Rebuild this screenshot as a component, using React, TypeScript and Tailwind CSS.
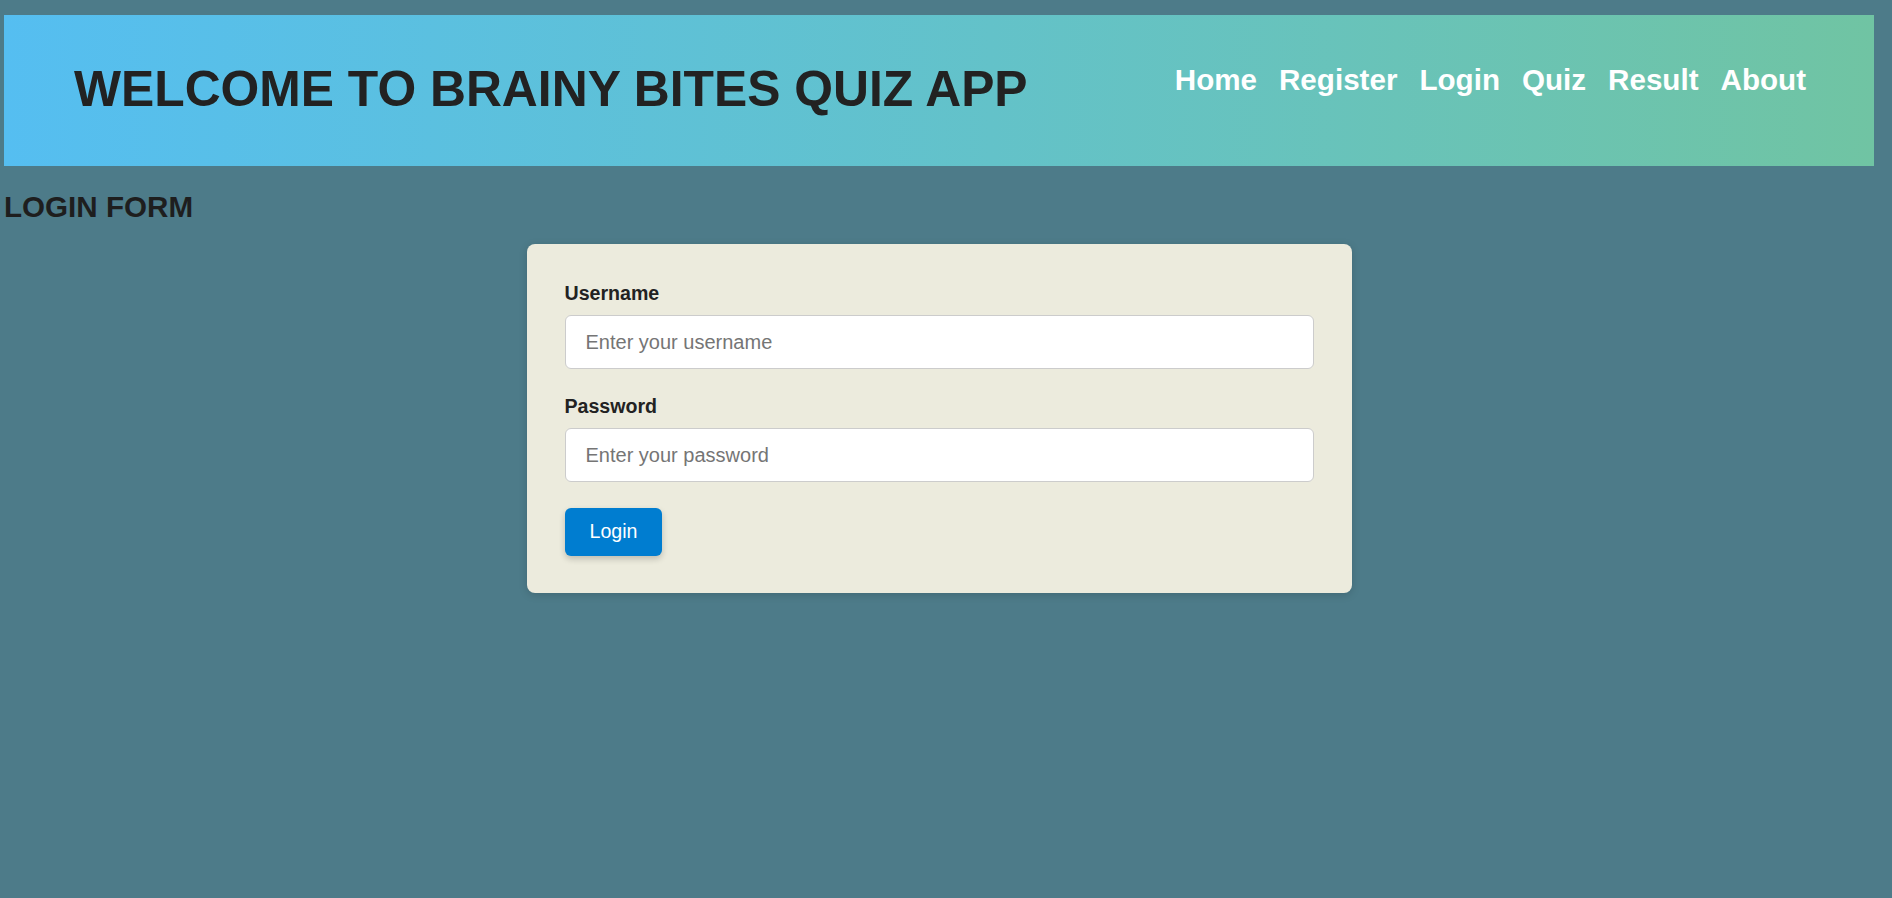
const navLinks = ['Home', 'Register', 'Login', 'Quiz', 'Result', 'About'];

const Header = () => (
  <header className="ml-[4px] flex h-[151px] w-[1870px] items-start justify-between bg-gradient-to-r from-[#55bef1] to-[#70c4a3] pl-[70px] pr-[68px]">
    <h1 className="mt-[46px] text-[49.8px] font-bold leading-[57px] text-[#222222]">
      WELCOME TO BRAINY BITES QUIZ APP
    </h1>
    <nav className="mt-[48px] flex gap-[22px]">
      {navLinks.map((link) => (
        <a key={link} href="#" className="text-[29.6px] font-bold leading-[34px] text-white">
          {link}
        </a>
      ))}
    </nav>
  </header>
);

const Field = ({ label, placeholder, type }: { label: string; placeholder: string; type: string }) => (
  <div className="mb-[26px] flex flex-col">
    <label className="mb-[10px] text-[19.6px] font-bold leading-[23px] text-[#222222]">{label}</label>
    <input
      type={type}
      placeholder={placeholder}
      className="h-[54px] w-full rounded-[6px] border border-[#cccccc] bg-white px-[20px] text-[20px] text-[#222222] outline-none placeholder:text-[#757575]"
    />
  </div>
);

export default function App() {
  return (
    <div
      className="min-h-[898px] w-full bg-[#4d7b89] pt-[15px] pb-10"
      style={{ fontFamily: '"Liberation Sans", Arial, sans-serif' }}
    >
      <Header />
      <h2 className="ml-[4px] mt-[24px] text-[29.6px] font-bold leading-[34px] text-[#1e1e1e]">LOGIN FORM</h2>
      <div className="mt-[20px] w-[1878px]">
        <form className="mx-auto w-[825px] rounded-[8px] bg-[#ecebdd] p-[38px] pb-[37px] shadow-[0_2px_8px_rgba(0,0,0,0.15)]">
          <Field label="Username" placeholder="Enter your username" type="text" />
          <Field label="Password" placeholder="Enter your password" type="password" />
          <button
            type="button"
            className="h-[48px] rounded-[6px] bg-[#007dd0] px-[25px] text-[19.6px] text-white shadow-[0_3px_6px_rgba(0,0,0,0.2)]"
          >
            Login
          </button>
        </form>
      </div>
    </div>
  );
}
